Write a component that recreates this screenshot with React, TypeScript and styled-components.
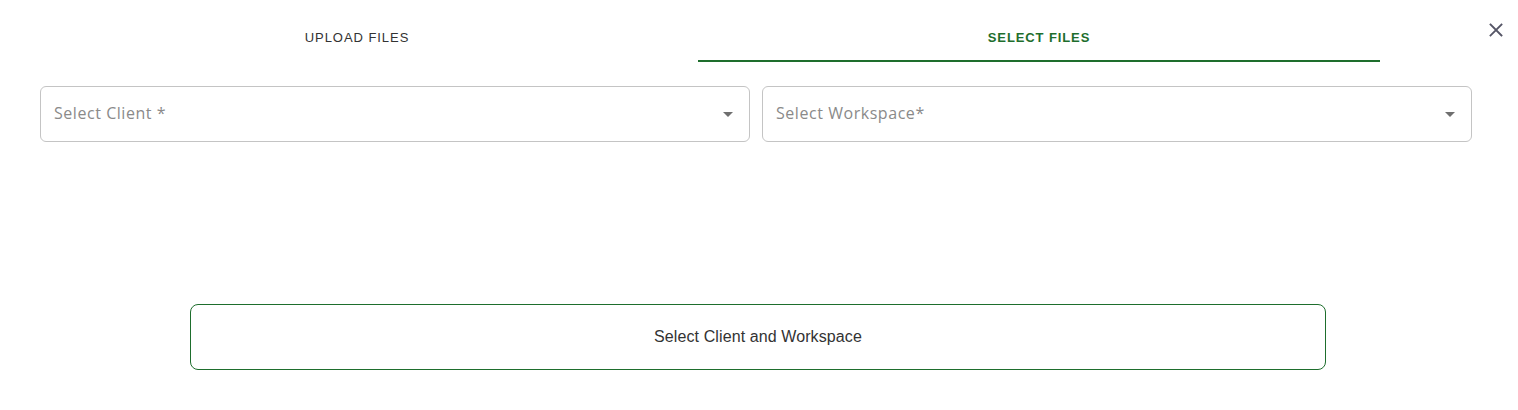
import React from "react";
import styled, { createGlobalStyle } from "styled-components";

const GlobalStyle = createGlobalStyle`
  html, body { margin: 0; padding: 0; background: #ffffff; }
  body { font-family: "Liberation Sans", Arial, sans-serif; }
`;

const GREEN = "#1e6e2d";

const Page = styled.div`
  width: 1518px;
  height: 410px;
  position: relative;
  background: #fff;
`;

const Header = styled.div`
  display: flex;
  padding-top: 14px;
  padding-left: 16px;
`;

const Tabs = styled.div`
  display: grid;
  grid-template-columns: 682px 682px;
`;

const Tab = styled.div<{ $active?: boolean }>`
  height: 46px;
  display: flex;
  align-items: center;
  justify-content: center;
  font-family: "Liberation Sans", Arial, sans-serif;
  font-size: 13px;
  letter-spacing: ${(p) => (p.$active ? "0.9px" : "0.95px")};
  font-weight: ${(p) => (p.$active ? 700 : 400)};
  color: ${(p) => (p.$active ? GREEN : "#333")};
  border-bottom: 2px solid ${(p) => (p.$active ? GREEN : "transparent")};
`;

const Close = styled.button`
  position: absolute;
  top: 20px;
  right: 12px;
  width: 20px;
  height: 20px;
  padding: 0;
  border: none;
  background: transparent;
  display: flex;
  align-items: center;
  justify-content: center;
`;

const SelectRow = styled.div`
  display: grid;
  grid-template-columns: 1fr 1fr;
  gap: 12px;
  padding: 24px 46px 0 40px;
`;

const SelectBox = styled.div`
  height: 56px;
  box-sizing: border-box;
  border: 1px solid #c4c4c4;
  border-radius: 6px;
  display: flex;
  align-items: center;
  justify-content: space-between;
  padding: 0 16px 0 13px;
`;

const Placeholder = styled.span`
  font-family: "Open Sans", "Noto Sans", sans-serif;
  font-size: 16px;
  letter-spacing: 0.55px;
  color: #8a8a8a;
  padding-bottom: 2px;
`;

const Caret = styled.span`
  width: 0;
  height: 0;
  border-left: 5px solid transparent;
  border-right: 5px solid transparent;
  border-top: 5px solid #6f6f6f;
`;

const ButtonWrap = styled.div`
  display: flex;
  justify-content: center;
  padding-top: 162px;
  padding-right: 2px;
`;

const ActionButton = styled.button`
  width: 1136px;
  height: 66px;
  box-sizing: border-box;
  border: 1px solid ${GREEN};
  border-radius: 8px;
  background: #fff;
  font-family: "Liberation Sans", Arial, sans-serif;
  font-size: 16px;
  letter-spacing: 0.1px;
  color: #333;
`;

export default function App() {
  return (
    <Page>
      <GlobalStyle />
      <Header>
        <Tabs>
          <Tab>UPLOAD FILES</Tab>
          <Tab $active>SELECT FILES</Tab>
        </Tabs>
      </Header>
      <Close aria-label="close">
        <svg width="14" height="14" viewBox="0 0 14 14">
          <path d="M1.5 1.5 L12.5 12.5 M12.5 1.5 L1.5 12.5" stroke="#555566" strokeWidth="1.8" strokeLinecap="square" fill="none" />
        </svg>
      </Close>
      <SelectRow>
        <SelectBox>
          <Placeholder>Select Client *</Placeholder>
          <Caret />
        </SelectBox>
        <SelectBox>
          <Placeholder>Select Workspace*</Placeholder>
          <Caret />
        </SelectBox>
      </SelectRow>
      <ButtonWrap>
        <ActionButton>Select Client and Workspace</ActionButton>
      </ButtonWrap>
    </Page>
  );
}
